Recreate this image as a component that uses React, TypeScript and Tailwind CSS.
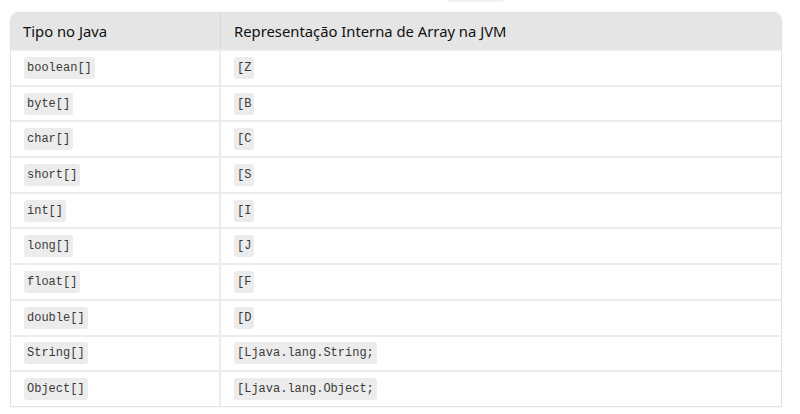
const rows: [string, string][] = [
  ["boolean[]", "[Z"],
  ["byte[]", "[B"],
  ["char[]", "[C"],
  ["short[]", "[S"],
  ["int[]", "[I"],
  ["long[]", "[J"],
  ["float[]", "[F"],
  ["double[]", "[D"],
  ["String[]", "[Ljava.lang.String;"],
  ["Object[]", "[Ljava.lang.Object;"],
];

function Code({ children }: { children: string }) {
  return (
    <code className="rounded-[3px] bg-[#ececec] px-[3px] py-[2px] font-['Liberation_Mono',monospace] text-[12px] text-[#3a3a3a]">
      {children}
    </code>
  );
}

export default function App() {
  return (
    <div className="h-[414px] w-[800px] bg-white font-['Noto_Sans',sans-serif]">
      <div className="ml-[448px] h-[2px] w-[55px] bg-[#f2f2f2]" />
      <div className="ml-[10px] mt-[10px] w-[772px] overflow-hidden rounded-t-[8px] border border-[#e2e2e2] shadow-[0_0_2px_rgba(0,0,0,0.08)]">
        <div className="grid grid-cols-[210px_1fr] bg-[#e5e5e5] text-[14.8px] text-[#111]">
          <div className="flex h-[36px] items-center border-r border-[#d9d9d9] px-[12px]">
            Tipo no Java
          </div>
          <div className="flex h-[36px] items-center px-[13px]">
            Representação Interna de Array na JVM
          </div>
        </div>
        {rows.map(([t, r]) => (
          <div
            key={t}
            className="grid grid-cols-[210px_1fr] border-t-2 border-[#ececec]"
          >
            <div className="flex h-[33.7px] items-center border-r-2 border-[#ececec] px-[13px]">
              <Code>{t}</Code>
            </div>
            <div className="flex h-[33.7px] items-center px-[13px]">
              <Code>{r}</Code>
            </div>
          </div>
        ))}
      </div>
    </div>
  );
}
